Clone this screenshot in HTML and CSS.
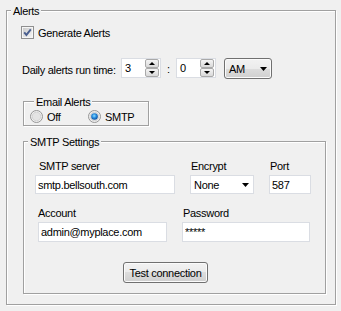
FILE: index.html
```html
<!DOCTYPE html>
<html lang="en">
<head>
    <meta charset="UTF-8">
    <meta name="viewport" content="width=device-width, initial-scale=1.0">
    <title>Alerts</title>
    <link rel="stylesheet" href="styles.css">
</head>
<body>
    <fieldset class="group alerts">
        <legend>Alerts</legend>

        <label class="check-row">
            <span class="checkbox">
                <svg width="13" height="13" viewBox="0 0 13 13">
                    <defs>
                        <linearGradient id="boxFill" x1="0" y1="0" x2="1" y2="1">
                            <stop offset="0" stop-color="#cbcbcb"/>
                            <stop offset="1" stop-color="#f4f4f4"/>
                        </linearGradient>
                    </defs>
                    <rect x="0.5" y="0.5" width="12" height="12" fill="#f6f6f6" stroke="#8f8f8f"/>
                    <rect x="2" y="2" width="9" height="9" fill="url(#boxFill)"/>
                    <path d="M3.2 6.4 L5.4 8.9 L9.8 3.4" fill="none" stroke="#4a5f8f" stroke-width="1.9"/>
                </svg>
            </span>
            Generate Alerts
        </label>

        <div class="time-row">
            <span class="time-label">Daily alerts run time:</span>
            <div class="spinner">
                <span class="spin-value">3</span>
                <span class="spin-buttons">
                    <span class="spin-btn up"></span>
                    <span class="spin-btn down"></span>
                </span>
            </div>
            <span class="colon">:</span>
            <div class="spinner">
                <span class="spin-value">0</span>
                <span class="spin-buttons">
                    <span class="spin-btn up"></span>
                    <span class="spin-btn down"></span>
                </span>
            </div>
            <div class="combo">
                <span>AM</span>
                <svg class="arrow" width="7" height="4" viewBox="0 0 7 4"><path d="M0 0h7L3.5 4z"/></svg>
            </div>
        </div>

        <fieldset class="group email">
            <legend>Email Alerts</legend>
            <div class="radio-row">
                <span class="radio-option off">
                    <svg class="radio" width="13" height="13" viewBox="0 0 13 13">
                        <circle cx="6.5" cy="6.5" r="6" fill="#f1f1f1" stroke="#969696"/>
                        <circle cx="6.5" cy="6.5" r="4.3" fill="#e4e4e4" stroke="#d2d2d2"/>
                    </svg>
                    Off
                </span>
                <span class="radio-option">
                    <svg class="radio" width="13" height="13" viewBox="0 0 13 13">
                        <defs>
                            <radialGradient id="dot" cx="0.45" cy="0.4" r="0.6">
                                <stop offset="0" stop-color="#8fe0ff"/>
                                <stop offset="0.5" stop-color="#2a8ee0"/>
                                <stop offset="1" stop-color="#0b4f9e"/>
                            </radialGradient>
                        </defs>
                        <circle cx="6.5" cy="6.5" r="6" fill="#f1f1f1" stroke="#969696"/>
                        <circle cx="6.5" cy="6.5" r="4.3" fill="#e4e4e4" stroke="#d2d2d2"/>
                        <circle cx="6.5" cy="6.5" r="3.3" fill="url(#dot)"/>
                    </svg>
                    SMTP
                </span>
            </div>
        </fieldset>

        <fieldset class="group smtp">
            <legend>SMTP Settings</legend>

            <div class="field-row first">
                <div class="field server">
                    <label>SMTP server</label>
                    <input class="textbox" type="text" value="smtp.bellsouth.com">
                </div>
                <div class="field encrypt">
                    <label>Encrypt</label>
                    <div class="textbox select">
                        <span>None</span>
                        <svg class="arrow" width="7" height="4" viewBox="0 0 7 4"><path d="M0 0h7L3.5 4z"/></svg>
                    </div>
                </div>
                <div class="field port">
                    <label>Port</label>
                    <input class="textbox" type="text" value="587">
                </div>
            </div>

            <div class="field-row second">
                <div class="field account">
                    <label>Account</label>
                    <input class="textbox" type="text" value="admin@myplace.com">
                </div>
                <div class="field password">
                    <label>Password</label>
                    <input class="textbox" type="text" value="*****">
                </div>
            </div>

            <button class="btn" type="button">Test connection</button>
        </fieldset>
    </fieldset>
</body>
</html>
```

FILE: styles.css
```css
body {
    margin: 0;
    width: 341px;
    height: 311px;
    overflow: hidden;
    background-color: #f0f0f0;
    font-family: "Liberation Sans", Arial, sans-serif;
    font-size: 11px;
    letter-spacing: -0.3px;
    color: #000;
}

/* group boxes */
.group {
    margin: 0;
    padding: 0;
    min-width: 0;
    border: 1px solid #a0a0a0;
    box-shadow: inset 1px 1px #fff, 1px 1px #fff;
}
.group legend {
    margin-left: 4px;
    padding: 3px 2px 0;
    line-height: 13px;
    background-color: #f0f0f0;
}
.alerts {
    margin: 2px 5px 0 6px;
    padding: 8px 0 10px;
}
.email {
    width: 126px;
    box-sizing: border-box;
    margin: 14px 0 0 16px;
    padding: 1px 0 2px 6px;
}
.smtp {
    margin: 7px 9px 0 16px;
    padding: 11px 0 10px;
}

/* checkbox */
.check-row {
    display: flex;
    align-items: center;
    gap: 4px;
    height: 13px;
    margin-left: 14px;
}
.checkbox {
    display: flex;
    width: 13px;
    height: 13px;
}

/* time row */
.time-row {
    display: flex;
    align-items: flex-start;
    height: 21px;
    margin: 19px 0 0 15px;
}
.time-label {
    width: 99px;
    padding-top: 6px;
    line-height: 13px;
    white-space: nowrap;
}
.spinner {
    display: flex;
    justify-content: space-between;
    width: 40px;
    height: 20px;
    box-sizing: border-box;
    padding: 0 1px 0 3px;
    border: 1px solid #dadde3;
    background-color: #fff;
}
.spin-value {
    line-height: 18px;
}
.spin-buttons {
    display: flex;
    flex-direction: column;
    width: 14px;
}
.spin-btn {
    display: flex;
    align-items: center;
    justify-content: center;
    height: 9px;
    box-sizing: border-box;
    border: 1px solid #a9a9a9;
    border-radius: 2px;
    background: linear-gradient(#f4f4f4, #d9d9d9);
}
.spin-btn::after {
    content: "";
    width: 0;
    height: 0;
    border-left: 3px solid transparent;
    border-right: 3px solid transparent;
}
.spin-btn.up::after {
    border-bottom: 3px solid #000;
}
.spin-btn.down::after {
    border-top: 3px solid #000;
}
.colon {
    width: 15px;
    text-align: center;
    padding-top: 5px;
    line-height: 13px;
}
.combo {
    display: flex;
    align-items: center;
    justify-content: space-between;
    width: 48px;
    height: 21px;
    box-sizing: border-box;
    margin-left: 8px;
    padding: 0 4px 0 4px;
    border: 1px solid #707070;
    border-radius: 3px;
    background: linear-gradient(#f2f2f2 0%, #ebebeb 50%, #dddddd 50%, #cfcfcf 100%);
    box-shadow: inset 0 0 0 1px #fbfbfb;
}
.arrow {
    display: block;
}

/* radios */
.radio-row {
    display: flex;
    align-items: center;
    height: 13px;
}
.radio-option {
    display: flex;
    align-items: center;
    gap: 4px;
}
.radio-option.off {
    width: 58px;
}
.radio {
    display: block;
}

/* smtp fields */
.field-row {
    display: flex;
    gap: 15px;
}
.field-row.first {
    margin-left: 11px;
}
.field-row.second {
    margin: 13px 0 0 14px;
}
.field label {
    display: block;
    padding-left: 1px;
    margin-bottom: 2px;
    line-height: 13px;
}
.field.server label {
    padding-left: 4px;
}
.field.account label {
    padding-left: 0;
}
.textbox {
    display: block;
    width: 100%;
    height: 19px;
    box-sizing: border-box;
    margin: 0;
    padding: 0 0 0 2px;
    border: 1px solid #dadde3;
    background-color: #fff;
    font: inherit;
    letter-spacing: inherit;
    color: #000;
    outline: none;
}
.second .textbox {
    height: 20px;
}
.select {
    display: flex;
    align-items: center;
    justify-content: space-between;
    padding: 0 4px 0 3px;
}
.server { width: 140px; }
.encrypt { width: 64px; }
.port { width: 42px; }
.account { width: 129px; }
.password { width: 128px; }

.btn {
    display: block;
    width: 85px;
    height: 21px;
    margin: 20px 0 0 99px;
    padding: 0;
    border: 1px solid #707070;
    border-radius: 3px;
    background: linear-gradient(#f2f2f2 0%, #ebebeb 50%, #dddddd 50%, #cfcfcf 100%);
    box-shadow: inset 0 0 0 1px #fbfbfb;
    font: inherit;
    letter-spacing: inherit;
    color: #000;
}
```
